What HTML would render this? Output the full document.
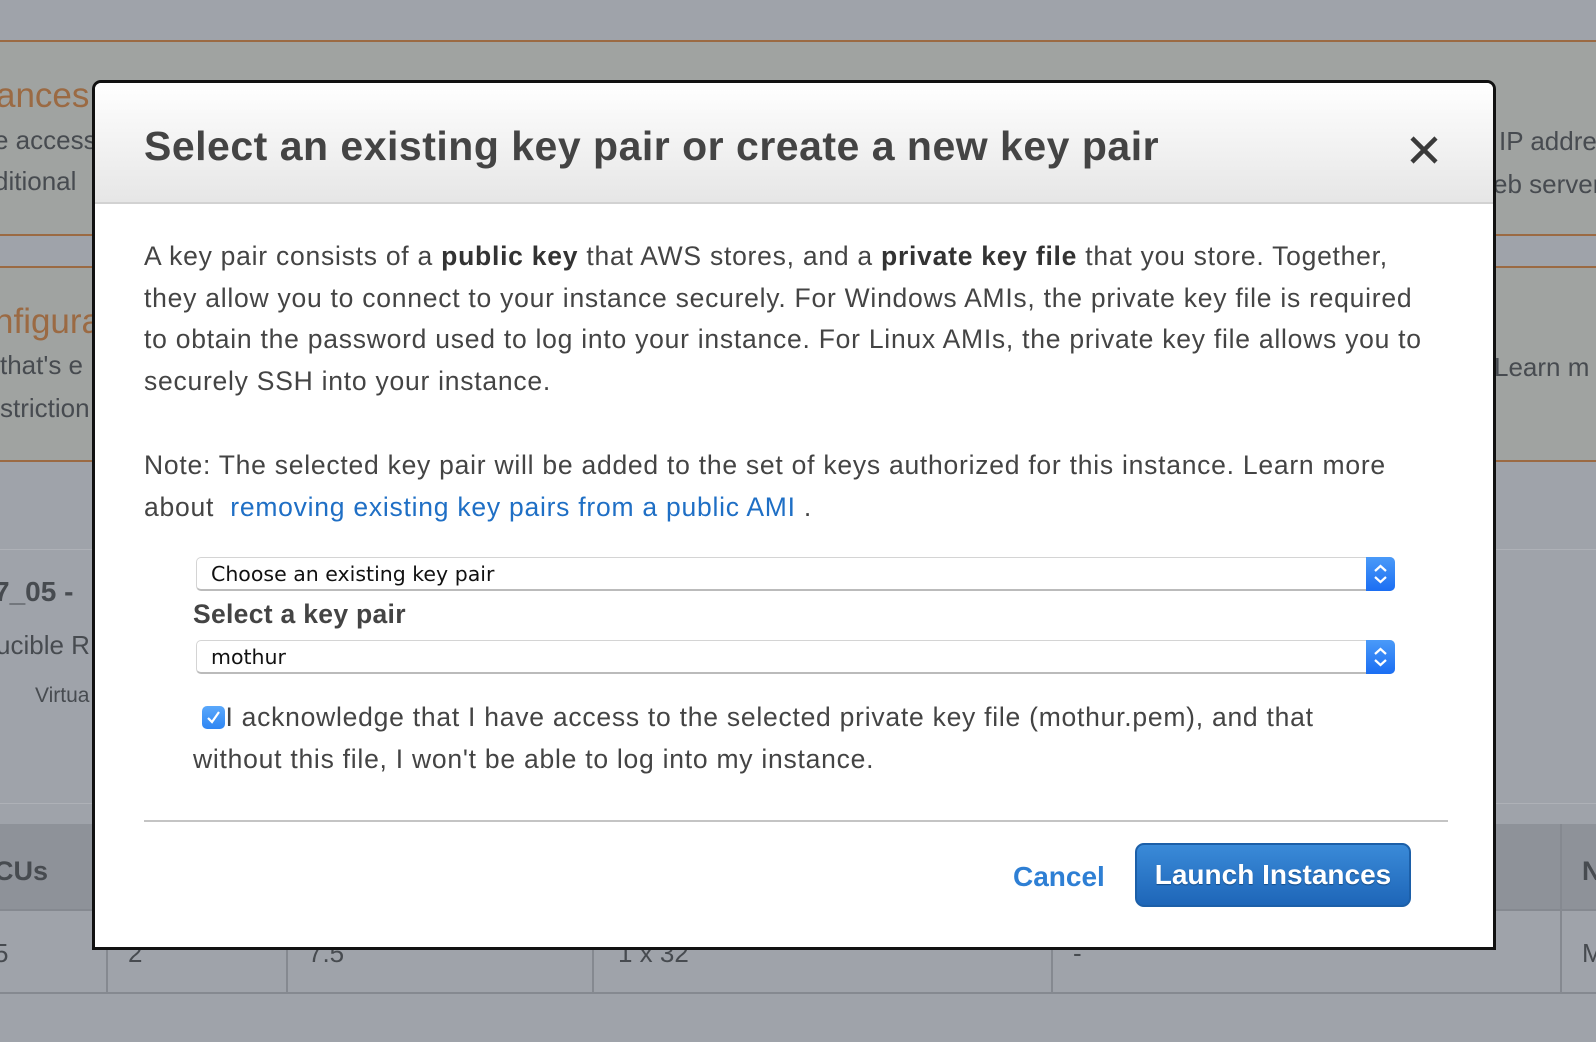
<!DOCTYPE html>
<html><head><meta charset="utf-8"><style>
*{margin:0;padding:0;box-sizing:border-box}
body{width:1596px;height:1042px;overflow:hidden;position:relative;background:#9fa3aa;font-family:"Liberation Sans",Arial,sans-serif;color:#444}
.band{position:absolute;left:0;width:1596px}
.g{background:#a0a3a1}
.ol{position:absolute;left:0;width:1596px;height:2px;background:#9b6a43}
.bt{position:absolute;white-space:nowrap;font-size:26px;color:#474b50}
.modal{position:absolute;left:92px;top:80px;width:1404px;height:870px;background:#fff;border:3px solid #111;border-radius:9px 9px 0 0;overflow:hidden}
.hdr{height:121px;background:linear-gradient(#fff,#e6e6e6);border-bottom:2px solid #d2d2d2;position:relative}
.hdr h1{position:absolute;left:49px;top:40px;font-size:41px;font-weight:bold;color:#444;white-space:nowrap;letter-spacing:0.5px}
.x{position:absolute;left:1314px;top:52px}
.p{position:absolute;left:49px;font-size:26.5px;line-height:41.5px;color:#444;white-space:nowrap;letter-spacing:0.75px}
.p b{color:#333}
a{color:#1f6fc5;text-decoration:none}
.sel{position:absolute;left:101px;width:1199px;height:34px;border:1px solid #d4d4d4;border-bottom:2px solid #bbb;border-radius:5px;background:#fff;font-family:"DejaVu Sans",sans-serif;font-size:20.5px;color:#111;padding:4px 0 0 14px}
.arr{position:absolute;right:-1px;top:-1px;width:29px;height:34px;background:linear-gradient(#4a9af8,#1b6ef3);border-radius:0 5px 5px 0}
.cb{position:absolute;left:107px;top:623px;width:23px;height:23px;border-radius:5px;background:linear-gradient(#5aa8fb,#2f86f3)}
.btn{position:absolute;left:1040px;top:760px;width:276px;height:64px;border:2px solid #1c5fa8;border-radius:9px;background:linear-gradient(#3a8ad8,#1e66b8);color:#fff;font-weight:bold;font-size:28px;text-align:center;line-height:60px;text-shadow:0 1px 1px #134a85}
</style></head><body>
<div class="band g" style="top:41px;height:194px"></div>
<div class="band g" style="top:267px;height:194px"></div>
<div class="ol" style="top:40px"></div><div class="ol" style="top:234px"></div><div class="ol" style="top:266px"></div><div class="ol" style="top:460px"></div>
<div class="band" style="top:549px;height:1px;background:#aeb1b7"></div>
<div class="band" style="top:803px;height:1px;background:#aeb1b7"></div>
<div class="band" style="top:824px;height:86px;background:#8e9299"></div>
<div class="band" style="top:909px;height:2px;background:#858990"></div>
<div class="band" style="top:992px;height:2px;background:#858990"></div>
<div style="position:absolute;left:106px;top:910px;width:2px;height:84px;background:#858990"></div>
<div style="position:absolute;left:286px;top:910px;width:2px;height:84px;background:#858990"></div>
<div style="position:absolute;left:592px;top:910px;width:2px;height:84px;background:#858990"></div>
<div style="position:absolute;left:1051px;top:910px;width:2px;height:84px;background:#858990"></div>
<div style="position:absolute;left:1560px;top:824px;width:2px;height:170px;background:#858990"></div>
<div class="bt" style="left:-4px;top:76px;font-size:35px;color:#9b6a43">ances</div>
<div class="bt" style="left:-6px;top:125px">e access</div>
<div class="bt" style="left:-6px;top:166px">ditional</div>
<div class="bt" style="left:-6px;top:302px;font-size:35px;color:#9b6a43">nfigura</div>
<div class="bt" style="left:0;top:350px">that's e</div>
<div class="bt" style="left:0;top:393px">striction</div>
<div class="bt" style="left:-6px;top:576px;font-weight:bold;font-size:28px">7_05 -</div>
<div class="bt" style="left:-4px;top:630px">ucible R</div>
<div class="bt" style="left:35px;top:684px;font-size:21px">Virtua</div>
<div class="bt" style="left:-6px;top:856px;font-weight:bold;font-size:27px">CUs</div>
<div class="bt" style="left:-6px;top:938px">5</div>
<div class="bt" style="left:128px;top:938px">2</div>
<div class="bt" style="left:308px;top:938px">7.5</div>
<div class="bt" style="left:618px;top:938px">1 x 32</div>
<div class="bt" style="left:1073px;top:938px">-</div>
<div class="bt" style="left:1582px;top:856px;font-weight:bold;font-size:27px">N</div>
<div class="bt" style="left:1582px;top:938px">M</div>
<div class="bt" style="left:1499px;top:126px">IP addre</div>
<div class="bt" style="left:1493px;top:169px">eb server</div>
<div class="bt" style="left:1494px;top:352px">Learn m</div>

<div class="modal">
<div class="hdr"><h1>Select an existing key pair or create a new key pair</h1>
<svg class="x" width="30" height="30" viewBox="0 0 30 30"><path d="M3 3L27 27M27 3L3 27" stroke="#3a3a3a" stroke-width="4.5"/></svg></div>
<div class="p" style="top:153px">A key pair consists of a <b>public key</b> that AWS stores, and a <b>private key file</b> that you store. Together,<br>they allow you to connect to your instance securely. For Windows AMIs, the private key file is required<br>to obtain the password used to log into your instance. For Linux AMIs, the private key file allows you to<br>securely SSH into your instance.</div>
<div class="p" style="top:362px">Note: The selected key pair will be added to the set of keys authorized for this instance. Learn more<br>about&nbsp; <a>removing existing key pairs from a public AMI</a> .</div>
<div class="sel" style="top:474px">Choose an existing key pair<div class="arr"><svg width="29" height="34"><path d="M9 14l5.5-5 5.5 5M9 20l5.5 5 5.5-5" stroke="#fff" stroke-width="2.2" fill="none"/></svg></div></div>
<div class="p" style="top:511px;left:98px;font-weight:bold;color:#444;font-size:26.5px;letter-spacing:0.3px">Select a key pair</div>
<div class="sel" style="top:557px">mothur<div class="arr"><svg width="29" height="34"><path d="M9 14l5.5-5 5.5 5M9 20l5.5 5 5.5-5" stroke="#fff" stroke-width="2.2" fill="none"/></svg></div></div>
<div class="cb"><svg width="23" height="23"><path d="M6 12l4 4 7-10" stroke="#fff" stroke-width="2.2" fill="none"/></svg></div>
<div class="p" style="top:614px;left:98px">&nbsp;&nbsp;&nbsp;&nbsp;I acknowledge that I have access to the selected private key file (mothur.pem), and that<br>without this file, I won't be able to log into my instance.</div>
<div style="position:absolute;left:49px;top:737px;width:1304px;height:2px;background:#c4c4c4"></div>
<div style="position:absolute;left:918px;top:778px;font-size:28px;font-weight:bold;color:#2e7fd4">Cancel</div>
<div class="btn">Launch Instances</div>
</div>
</body></html>
